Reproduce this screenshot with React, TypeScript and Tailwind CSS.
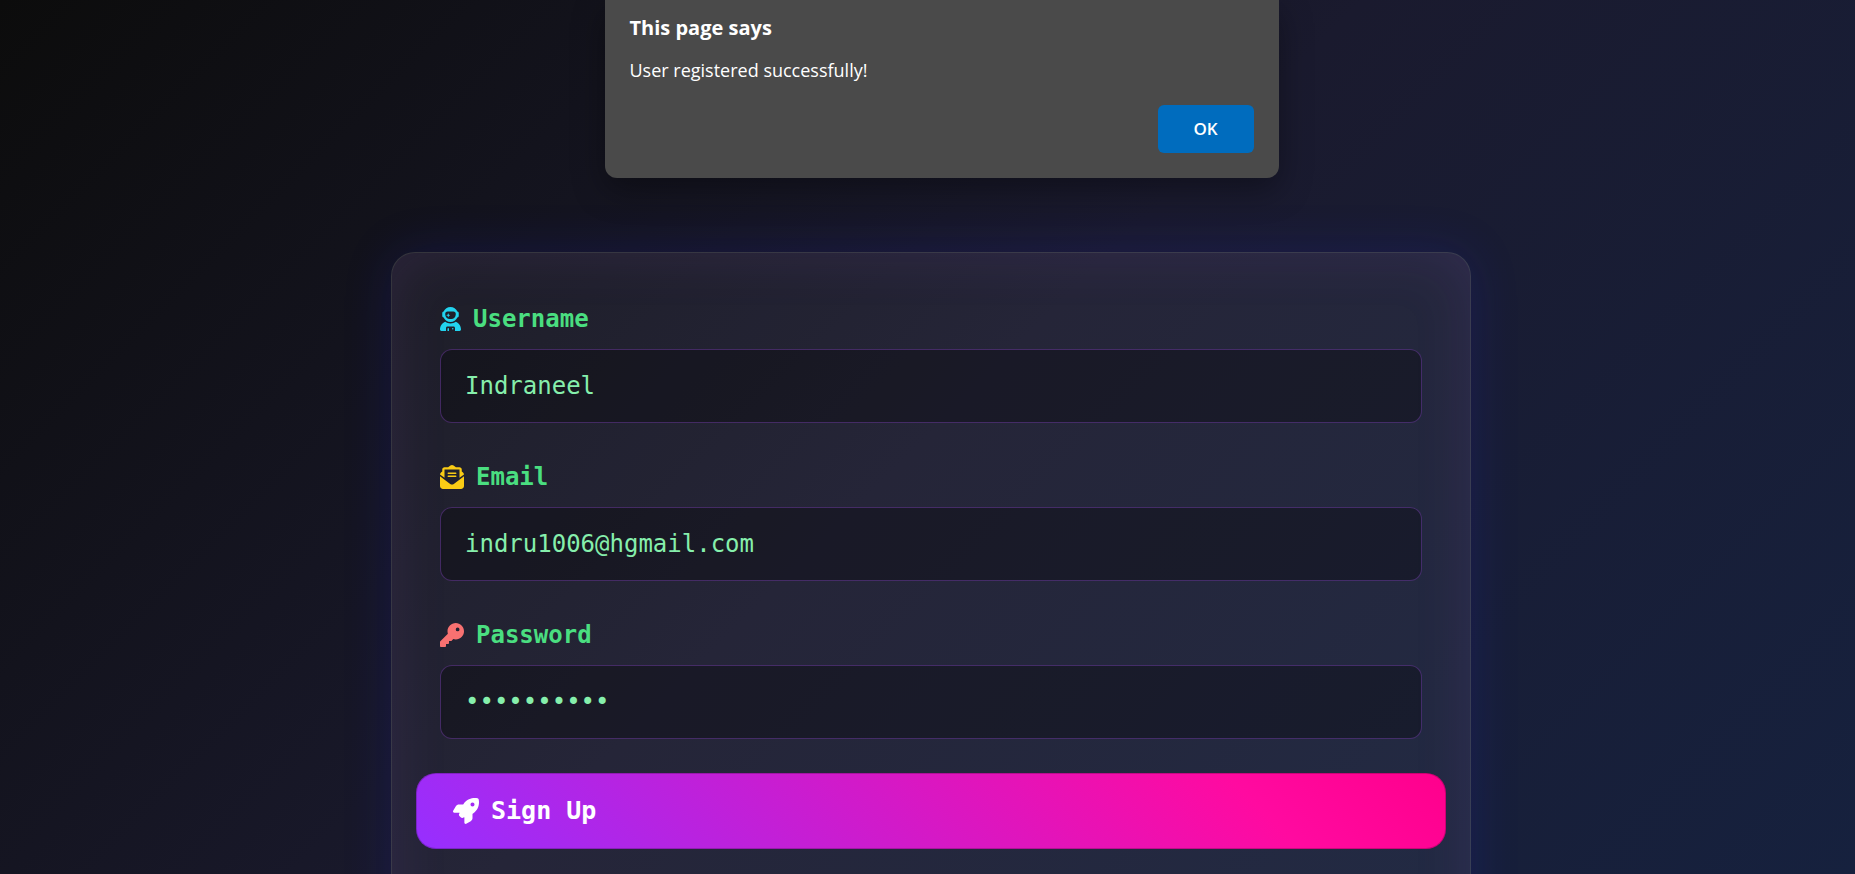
import { useState } from "react";
import type { ReactNode } from "react";
import { FaUserAstronaut, FaEnvelopeOpenText, FaKey, FaRocket } from "react-icons/fa6";

type FieldProps = {
  id: string;
  label: string;
  type: string;
  value: string;
  onChange: (value: string) => void;
  icon: ReactNode;
};

function Field({ id, label, type, value, onChange, icon }: FieldProps) {
  return (
    <div className="flex flex-col gap-3.5">
      <label htmlFor={id} className="flex h-8 items-center gap-3 text-2xl font-bold text-[#4ade80]">
        {icon}
        {label}
      </label>
      <input
        id={id}
        type={type}
        value={value}
        onChange={(e) => onChange(e.target.value)}
        className="h-[74px] w-full rounded-xl border border-[#a855f7]/30 bg-black/30 px-6 text-2xl text-[#86efac] outline-none"
      />
    </div>
  );
}

function AlertDialog() {
  return (
    <div
      role="alertdialog"
      aria-labelledby="alert-title"
      aria-describedby="alert-text"
      className="absolute top-0 left-1/2 ml-3.5 flex w-[674px] -translate-x-1/2 flex-col rounded-b-xl bg-[#4a4a4a] px-[25px] pt-3 pb-[25px] font-['Open_Sans','Noto_Sans',sans-serif] text-white shadow-[0_12px_32px_rgba(0,0,0,0.35)]"
    >
      <h2 id="alert-title" className="text-xl leading-8 font-bold">
        This page says
      </h2>
      <p id="alert-text" className="mt-3 text-lg leading-7">
        User registered successfully!
      </p>
      <button type="button" className="mt-[21px] h-12 w-24 self-end rounded-md bg-[#006cbe] text-[17px] font-semibold">
        OK
      </button>
    </div>
  );
}

export default function App() {
  const [username, setUsername] = useState("Indraneel");
  const [email, setEmail] = useState("indru1006@hgmail.com");
  const [password, setPassword] = useState("indraneel1");

  return (
    <div className="relative h-screen overflow-hidden bg-[linear-gradient(135deg,#0c0c0c_0%,#1a1a2e_50%,#16213e_100%)] font-['DejaVu_Sans_Mono',monospace]">
      <main className="flex justify-center pt-[252px] pl-[7px]">
        <form
          onSubmit={(e) => e.preventDefault()}
          className="w-full max-w-[1080px] rounded-3xl border border-white/10 bg-white/5 px-6 pt-[50px] pb-24 shadow-[0_0_50px_rgba(31,38,235,0.16),inset_0_0_60px_rgba(168,85,247,0.1)]"
        >
          <div className="flex flex-col gap-[38px] px-6">
            <Field
              id="username"
              label="Username"
              type="text"
              value={username}
              onChange={setUsername}
              icon={<FaUserAstronaut className="h-6 w-[21px] text-[#22d3ee]" />}
            />
            <Field
              id="email"
              label="Email"
              type="email"
              value={email}
              onChange={setEmail}
              icon={<FaEnvelopeOpenText className="size-6 text-[#facc15]" />}
            />
            <Field
              id="password"
              label="Password"
              type="password"
              value={password}
              onChange={setPassword}
              icon={<FaKey className="size-6 text-[#f87171]" />}
            />
          </div>
          <button
            type="submit"
            className="mt-[34px] flex h-[76px] w-full items-center gap-3 rounded-[20px] border border-black/20 bg-[linear-gradient(45deg,#962fff_0%,#ff0aa0_80%,#ff008c_100%)] bg-origin-border px-9 text-[25px] font-bold text-white"
          >
            <FaRocket className="size-[26px]" />
            Sign Up
          </button>
        </form>
      </main>
      <AlertDialog />
    </div>
  );
}
